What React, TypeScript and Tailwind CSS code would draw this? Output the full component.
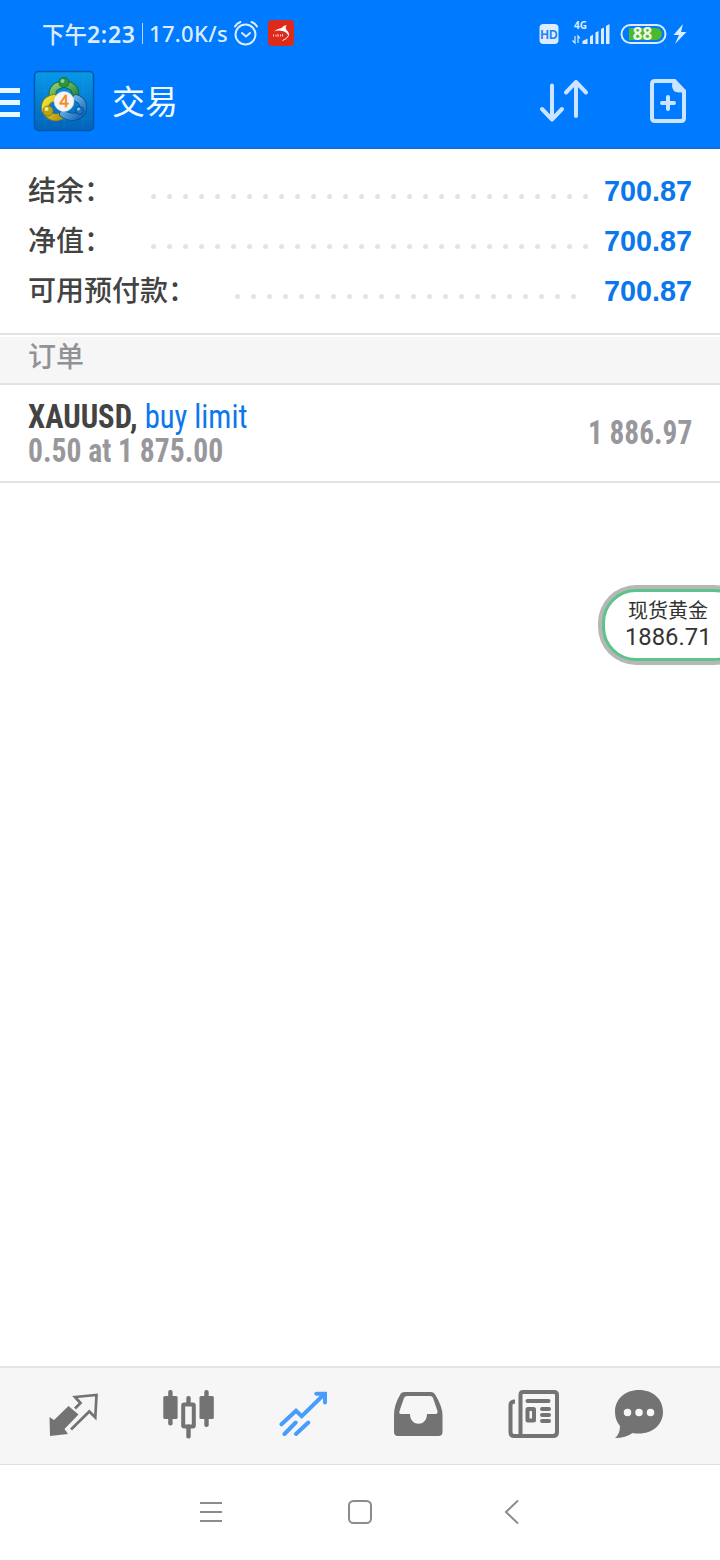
import type { ReactNode } from "react";

const cjk = "font-['Noto_Sans_CJK_SC',sans-serif]";
const condensed = "font-['Roboto_Condensed',Roboto,sans-serif] [font-stretch:75%]";

const summary = [
  { label: "结余：", value: "700.87", dots: 28 },
  { label: "净值：", value: "700.87", dots: 28 },
  { label: "可用预付款：", value: "700.87", dots: 22 },
];

function AlarmIcon() {
  return (
    <svg width="26" height="26" viewBox="0 0 26 26" fill="none" stroke="#d9ebff" strokeWidth="2" strokeLinecap="round" strokeLinejoin="round">
      <circle cx="12.500" cy="14.500" r="10" />
      <path d="M9 13l4 3.5 4-3.5" />
      <path d="M2 6.5Q4 3 7.5 2M24 6.5Q22 3 18.5 2" />
    </svg>
  );
}

function RedAppIcon() {
  return (
    <svg width="26" height="26" viewBox="0 0 26 26">
      <rect width="26" height="26" rx="4" fill="#dd2a1b" />
      <path d="M6 11.500Q9 8.500 13.500 8Q15.500 5.500 18.500 5Q17 7.500 18.500 10Q22 13 20.500 16Q18.500 11.500 14 11Q10 10 6 11.500Z" fill="#fff" />
      <path d="M20.500 15.500Q19 19 14.500 20.500" fill="none" stroke="#fff" strokeWidth="1" />
      <path d="M5.500 14.500v2M8 14.500v2M10 14v3M12.500 14.500v2M14.500 14v2.500" stroke="#fff" strokeOpacity=".8" strokeWidth="1" />
    </svg>
  );
}

function StatusIcons() {
  return (
    <svg width="150" height="30" viewBox="538 18 150 30" fill="#dcecff">
      <rect x="539.500" y="24" width="19" height="20" rx="4" />
      <text x="549" y="38.500" fontSize="12" fontWeight="700" fill="#2383f5" textAnchor="middle" className="font-['Liberation_Sans',sans-serif]">HD</text>
      <text x="574" y="29" fontSize="10" fontWeight="700" className="font-['Open_Sans',sans-serif]">4G</text>
      <path d="M575 36v7l-2.500-2.500M578 43v-7l2 2.500" fill="none" stroke="#dcecff" strokeWidth="1.200" />
      <path d="M582.500 44v-3l5-2.500V44zM590 36.500l3-2V44h-3zM595.500 32.500l3-1.500V44h-3zM601 29l3-1.500V44h-3zM606 26l3.500-2V44H606z" />
      <rect x="621.500" y="25" width="44" height="18" rx="9" fill="none" stroke="#dcecff" strokeWidth="2" />
      <path d="M629 28h27a6 6 0 0 1 0 12h-27z" fill="#4cb82c" />
      <text x="642.500" y="40" fontSize="17" fontWeight="700" fill="#f2fbea" textAnchor="middle" className="font-['Noto_Sans',sans-serif]">88</text>
      <path d="M683 24l-9.500 11h5.500l-4 9 11.500-12h-5.500z" />
    </svg>
  );
}

function AppLogo() {
  return (
    <svg width="62" height="62" viewBox="0 0 62 62">
      <defs>
        <linearGradient id="tile" x1="0" y1="0" x2="0" y2="1">
          <stop offset="0" stopColor="#0899e8" />
          <stop offset="1" stopColor="#0362b8" />
        </linearGradient>
        <linearGradient id="green" x1="0" y1="0" x2="1" y2="1">
          <stop offset="0" stopColor="#8fd073" />
          <stop offset="1" stopColor="#1f8038" />
        </linearGradient>
        <linearGradient id="yellow" x1="0" y1="0" x2="1" y2="1">
          <stop offset="0" stopColor="#f3e63a" />
          <stop offset="1" stopColor="#b39a12" />
        </linearGradient>
        <linearGradient id="blue" x1="0" y1="0" x2="1" y2="1">
          <stop offset="0" stopColor="#8ed0f6" />
          <stop offset="1" stopColor="#0f63b5" />
        </linearGradient>
      </defs>
      <rect x="1.500" y="1.500" width="59" height="59" rx="4" fill="url(#tile)" stroke="#0757a8" strokeWidth="1.500" />
      <path d="M12 3v56M31 3v56M50 3v56M3 21h56M3 49h56" stroke="#3cadf0" strokeOpacity=".15" />
      <g fill="none" strokeLinecap="round">
        <path d="M20 28Q17 16 31 14Q45 16 42 28" stroke="#14682b" strokeWidth="7.500" />
        <path d="M20 28Q17 16 31 14Q45 16 42 28" stroke="url(#green)" strokeWidth="6" />
        <path d="M21 28Q11 30 12 40Q18 50 27 46.500" stroke="#8c7c12" strokeWidth="7.500" />
        <path d="M21 28Q11 30 12 40Q18 50 27 46.500" stroke="url(#yellow)" strokeWidth="6" />
        <path d="M43 28Q52 31 50 41Q43 51 30 44" stroke="#0b4b95" strokeWidth="7.500" />
        <path d="M43 28Q52 31 50 41Q43 51 30 44" stroke="url(#blue)" strokeWidth="6" />
      </g>
      <circle cx="31" cy="12.500" r="5" fill="#2d9444" stroke="#186f2c" />
      <circle cx="29.500" cy="11" r="2" fill="#8fd395" />
      <circle cx="15" cy="41" r="5" fill="#b5a51c" stroke="#8a7c10" />
      <circle cx="13.500" cy="39" r="2" fill="#f3ee8d" />
      <circle cx="46.500" cy="40.500" r="4" fill="#1774bd" stroke="#0b4d94" />
      <circle cx="45.500" cy="39" r="1.500" fill="#79c8f3" />
      <circle cx="31" cy="31.500" r="10" fill="#f6f5f4" stroke="#d8d8d8" strokeWidth=".5" />
      <text x="31" y="37" fontSize="16" fontWeight="400" textAnchor="middle" fill="#f28a2e" stroke="#f28a2e" strokeWidth=".7" className="font-['Open_Sans',sans-serif]">4</text>
    </svg>
  );
}

function SortIcon() {
  return (
    <svg width="50" height="44" viewBox="0 0 50 44" fill="none" stroke="#cce4ff" strokeWidth="4" strokeLinecap="round" strokeLinejoin="round">
      <path d="M13 6.500v34M3 30l10 10.500 10-10.500M37 37V3M27 13.500L37 3l10 10.500" />
    </svg>
  );
}

function NewOrderIcon() {
  return (
    <svg width="36" height="44" viewBox="0 0 36 44" fill="none" stroke="#cce4ff" strokeWidth="4">
      <path d="M24.500 2H5Q2 2 2 5V39Q2 42 5 42H31Q34 42 34 39V12Z" />
      <path d="M23 1l12.500 12.500h-6.500Q22 13.500 22 6z" fill="#cce4ff" stroke="none" />
      <path d="M12 24h12M18 18v12" strokeLinecap="round" />
    </svg>
  );
}

function Tabs() {
  const tabs: ReactNode[] = [
    <svg key="quotes" width="52" height="48" viewBox="0 0 52 48" className="ml-[48px]">
      <path d="M1.500 27L6 30 20.500 16 30.500 24.500 16.500 39 20 44 2 46Z" fill="#737373" />
      <path d="M27 18.500L32.500 13 27 7 48.500 5 47.300 27.500 41.300 21.500 23 39.500" fill="none" stroke="#737373" strokeWidth="2.700" />
    </svg>,
    <svg key="charts" width="52" height="50" viewBox="0 0 52 50" fill="#737373" className="ml-[63px]">
      <rect x="0.300" y="7" width="14.300" height="23" rx="1.500" />
      <rect x="5.200" y="1" width="4.400" height="35.500" rx="2" />
      <rect x="36.500" y="7" width="14.300" height="23" rx="1.500" />
      <rect x="41.300" y="1" width="4.400" height="37" rx="2" />
      <rect x="23.300" y="7" width="4.400" height="10" rx="2" />
      <rect x="23.300" y="35.500" width="4.400" height="14" rx="2" />
      <rect x="20.200" y="15.500" width="10.600" height="22" rx="1" fill="none" stroke="#737373" strokeWidth="4" />
    </svg>,
    <svg key="trade" width="50" height="46" viewBox="0 0 50 46" fill="none" stroke="#489cfa" strokeWidth="4" strokeLinecap="round" className="ml-[64px]">
      <path d="M2.500 33.300L17 19.700 22.700 25.300 45 3.500M37.300 2.800H46v8.700M16.700 31.500L5.500 43M29.300 31.500L17 43" />
    </svg>,
    <svg key="history" width="50" height="46" viewBox="0 0 50 46" className="ml-[64px]">
      <path
        fillRule="evenodd"
        fill="#737373"
        d="M12 1H38Q41 1 43 5Q49.500 16 49.500 24V41Q49.500 45 45.500 45H5Q1 45 1 41V24Q1 14 7 4Q8 1 12 1ZM14 5Q12 5 11 7L6.500 20Q5.500 23 8 23H17C17 36 34 36 34 23H42.500Q45 23 44.500 20L40 7Q39.500 5 37 5Z"
      />
    </svg>,
    <svg key="news" width="52" height="50" viewBox="0 0 52 50" fill="none" stroke="#737373" strokeWidth="4" strokeLinecap="round" className="ml-[64px]">
      <path d="M8 12.500Q3.500 12.500 3.500 16V43Q3.500 47 7 47H46Q50 47 50 43V6Q50 3 47 3H16Q13.500 3 13.500 6V47" strokeLinecap="butt" />
      <path d="M20.500 12H41.500M35 20h7M35 26h7M35 32h7" />
      <rect x="20.500" y="20" width="6.500" height="11.500" rx=".5" />
    </svg>,
    <svg key="chat" width="50" height="50" viewBox="0 0 50 50" className="ml-[55px]">
      <path d="M25 1C39 1 49 10 49 23S38 44.500 25 44.500Q21 44.500 18.500 44Q12 49 1 49Q6 45 6 37Q1 31 1 23C1 10 11 1 25 1Z" fill="#737373" />
      <path d="M13.500 23.500h.01M25 23.500h.01M36.500 23.500h.01" stroke="#f7f7f7" strokeWidth="7.500" strokeLinecap="round" />
    </svg>,
  ];
  return (
    <nav className="flex h-[98px] items-center border-t-2 border-[#e3e3e3] bg-[#f6f6f6] pb-1">
      {tabs}
    </nav>
  );
}

export default function App() {
  return (
    <div className="relative flex h-[1560px] w-[720px] flex-col overflow-hidden bg-white text-[#434343]">
      <header className="h-[149px] border-b-2 border-[#0c70dc] bg-[#007aff] text-[#dcecff]">
        <div className="flex h-[66px] items-center pl-[42px]">
          <span className={`${cjk} w-[100px] text-[22.500px] leading-[30px] font-medium whitespace-nowrap`}>
            下午
            <span className="font-['Noto_Sans',sans-serif] text-[23px] font-semibold tracking-[0.700px]">2:23</span>
          </span>
          <span className="h-[21px] w-px bg-[#b5d8ff]" />
          <span className="ml-[6px] w-[84px] font-['Noto_Sans',sans-serif] text-[22px] leading-[28px] font-medium tracking-[0.300px] whitespace-nowrap">
            17.0K/s
          </span>
          <AlarmIcon />
          <span className="ml-[9px]">
            <RedAppIcon />
          </span>
          <span className="ml-[244px]">
            <StatusIcons />
          </span>
        </div>
        <div className="flex h-[70px] items-center">
          <div className="flex w-5 flex-col gap-[7px] pt-[3px]">
            <span className="h-[5px] bg-[#e6f8ff]" />
            <span className="h-[5px] bg-[#e6f8ff]" />
            <span className="h-[5px] bg-[#e6f8ff]" />
          </div>
          <span className="ml-[13px]">
            <AppLogo />
          </span>
          <h1 className={`${cjk} ml-[17px] w-[427px] pb-[2px] text-[33px] leading-[44px] text-[#f0fbff]`}>交易</h1>
          <SortIcon />
          <span className="ml-[61px]">
            <NewOrderIcon />
          </span>
        </div>
      </header>

      <section className="h-[186px] border-b-2 border-[#e3e3e5] pt-[16px]">
        {summary.map((row) => (
          <div key={row.label} className="flex h-[50px] items-center px-7">
            <span className={`${cjk} pb-[2px] text-[28px] leading-[48px] font-medium`}>{row.label}</span>
            <span className="mt-[13px] ml-[39px] flex gap-[11px]">
              {Array.from({ length: row.dots }, (_, i) => (
                <i key={i} className="size-[5px] rounded-full bg-[#e3e3e5]" />
              ))}
            </span>
            <span className="ml-auto pt-[1px] font-['Liberation_Sans',sans-serif] text-[28.800px] leading-[48px] font-bold text-[#0a78ec]">
              {row.value}
            </span>
          </div>
        ))}
      </section>

      <h2 className={`${cjk} mt-[2px] h-[48px] border-b-2 border-[#e3e3e5] bg-[#f6f6f6] pl-7 text-[28px] leading-[36px] font-medium text-[#929296]`}>
        订单
      </h2>

      <section className={`${condensed} flex h-[98px] items-center justify-between border-b-2 border-[#e3e3e5] px-7`}>
        <div className="pt-[1px] text-[32.500px] leading-[34px] whitespace-nowrap">
          <p className="origin-left scale-x-[.942]">
            <b>XAUUSD,</b> <span className="text-[#0a78ec]">buy limit</span>
          </p>
          <p className="origin-left scale-x-[.91] font-bold text-[#98989c]">0.50 at 1 875.00</p>
        </div>
        <span className="origin-right scale-x-[.89] pb-[1px] text-[33px] font-bold text-[#98989c]">1 886.97</span>
      </section>

      <main className="flex-1" />
      <Tabs />
      <footer className="flex h-[96px] items-center border-t border-[#dfdfdf] pb-[2px]">
        <svg width="720" height="30" viewBox="0 1497 720 30" fill="none" stroke="#8c8c8c" strokeWidth="2">
          <path d="M200 1503h22M200 1512h22M200 1521h22" />
          <rect x="349" y="1501" width="22" height="22" rx="4.500" />
          <path d="M518 1500.500L506 1512l12 11.500" />
        </svg>
      </footer>

      {/* floating quote */}
      <div className="absolute top-[585px] left-[598px] h-[80px] w-[154px] rounded-[38px] bg-[#b7b7b7] p-1">
        <div className="h-full rounded-[34px] border-[3.500px] border-[#5cc489] bg-white pt-[5px] text-[#333]">
          <div className={`${cjk} ml-[23px] text-[20px] leading-[26px]`}>现货黄金</div>
          <div className="ml-[20px] font-[Roboto,sans-serif] text-[23.800px] leading-[29px]">1886.71</div>
        </div>
      </div>
    </div>
  );
}
